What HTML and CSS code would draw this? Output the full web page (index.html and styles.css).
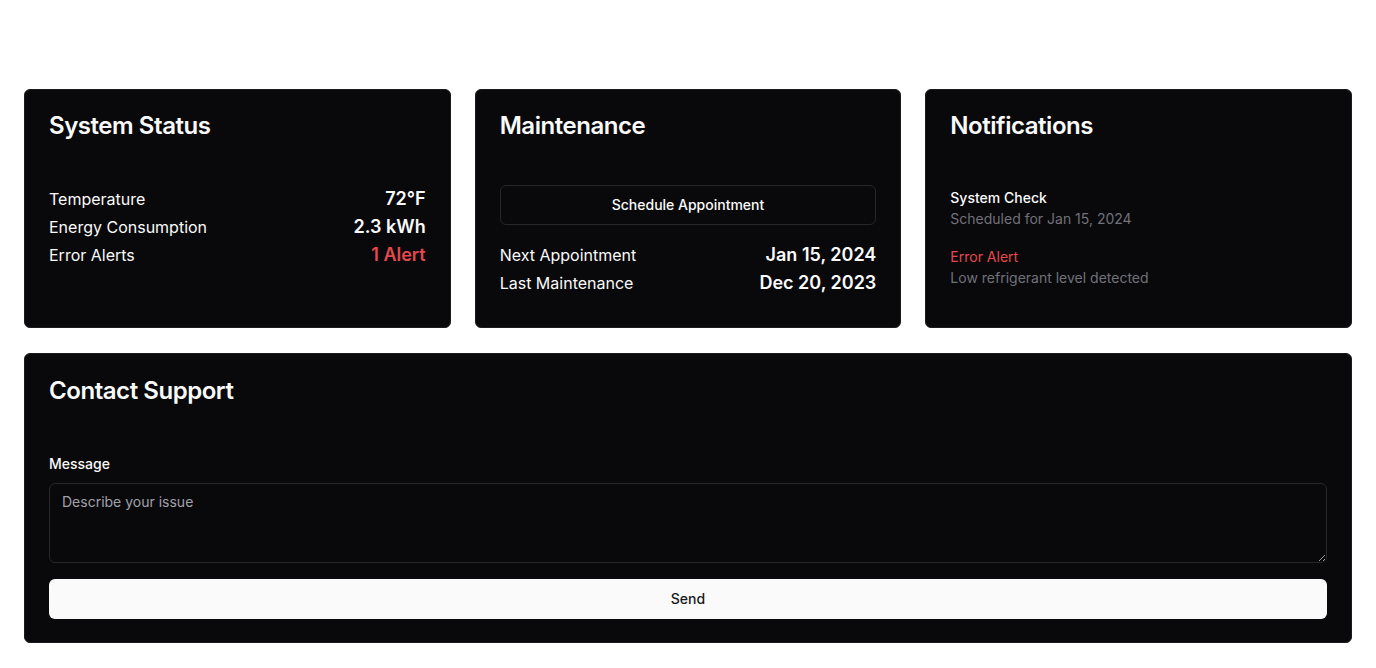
FILE: index.html
```html
<!DOCTYPE html>
<html lang="en">
<head>
<meta charset="utf-8">
<title>HVAC Dashboard</title>
<link rel="stylesheet" href="styles.css">
</head>
<body>
<main class="page">
  <section class="grid">
    <div class="card">
      <div class="card-header"><h2 class="card-title">System Status</h2></div>
      <div class="card-content">
        <div class="row"><span class="label">Temperature</span><span class="value">72°F</span></div>
        <div class="row"><span class="label">Energy Consumption</span><span class="value">2.3 kWh</span></div>
        <div class="row"><span class="label">Error Alerts</span><span class="value red">1 Alert</span></div>
      </div>
    </div>
    <div class="card">
      <div class="card-header"><h2 class="card-title">Maintenance</h2></div>
      <div class="card-content">
        <button class="btn-outline">Schedule Appointment</button>
        <div class="rows">
          <div class="row"><span class="label">Next Appointment</span><span class="value">Jan 15, 2024</span></div>
          <div class="row"><span class="label">Last Maintenance</span><span class="value">Dec 20, 2023</span></div>
        </div>
      </div>
    </div>
    <div class="card">
      <div class="card-header"><h2 class="card-title">Notifications</h2></div>
      <div class="card-content notifs">
        <div class="notif">
          <p class="notif-title">System Check</p>
          <p class="notif-desc">Scheduled for Jan 15, 2024</p>
        </div>
        <div class="notif">
          <p class="notif-title red">Error Alert</p>
          <p class="notif-desc">Low refrigerant level detected</p>
        </div>
      </div>
    </div>
  </section>
  <section class="card contact">
    <div class="card-header"><h2 class="card-title">Contact Support</h2></div>
    <div class="card-content form">
      <label class="form-label" for="msg">Message</label>
      <textarea id="msg" class="textarea" placeholder="Describe your issue"></textarea>
      <button class="btn-primary">Send</button>
    </div>
  </section>
</main>
</body>
</html>
```

FILE: styles.css
```css
* { box-sizing: border-box; }
html, body { margin: 0; padding: 0; background: #ffffff; }
body {
  font-family: Inter, "Liberation Sans", sans-serif;
  color: #fafafa;
  -webkit-font-smoothing: antialiased;
}
.page {
  padding: 89px 24px 24px;
  display: flex;
  flex-direction: column;
  gap: 25px;
}
.grid {
  display: grid;
  grid-template-columns: repeat(3, 1fr);
  gap: 24px;
}
.grid .card { min-height: 239px; }
.card {
  background: #09090b;
  border: 1px solid #1c1c1f;
  border-radius: 6px;
}
.card-header { padding: 24px 24px 0; }
.card-title {
  margin: 0;
  font-size: 24px;
  line-height: 23px;
  font-weight: 600;
  letter-spacing: -0.45px;
}
.contact .card-title { padding-top: 1px; }
.card-content {
  padding: 48px 24px 24px;
  display: flex;
  flex-direction: column;
}
.row {
  display: flex;
  justify-content: space-between;
  align-items: center;
  height: 28px;
}
.label { font-size: 16px; line-height: 24px; }
.value { font-size: 18px; line-height: 28px; font-weight: 600; }
.red { color: #e5484d; }
.btn-outline {
  height: 40px;
  width: 100%;
  background: transparent;
  color: #fafafa;
  border: 1px solid #27272a;
  border-radius: 6px;
  font-family: inherit;
  font-size: 14px;
  font-weight: 500;
  padding-bottom: 2px;
  margin-bottom: 16px;
}
.notifs { padding-top: 51px; gap: 18px; }
.notif p { margin: 0; font-size: 14px; line-height: 20px; }
.notif-title { font-weight: 500; }
.notif-title.red { font-weight: 400; }
.notif .notif-desc { color: #71717a; margin-top: 1px; }
.form { padding: 52px 24px 23px; }
.form-label {
  font-size: 14px;
  line-height: 20px;
  font-weight: 500;
  margin-bottom: 9px;
}
.textarea {
  height: 80px;
  width: 100%;
  background: #09090b;
  border: 1px solid #27272a;
  border-radius: 6px;
  padding: 8px 12px;
  font-family: inherit;
  font-size: 14px;
  line-height: 20px;
  color: #fafafa;
  margin-bottom: 16px;
  resize: vertical;
}
.textarea::placeholder { color: #a1a1aa; }
.btn-primary {
  height: 40px;
  width: 100%;
  background: #fafafa;
  color: #18181b;
  border: none;
  border-radius: 6px;
  font-family: inherit;
  font-size: 14px;
  font-weight: 500;
  padding-bottom: 2px;
}
```
